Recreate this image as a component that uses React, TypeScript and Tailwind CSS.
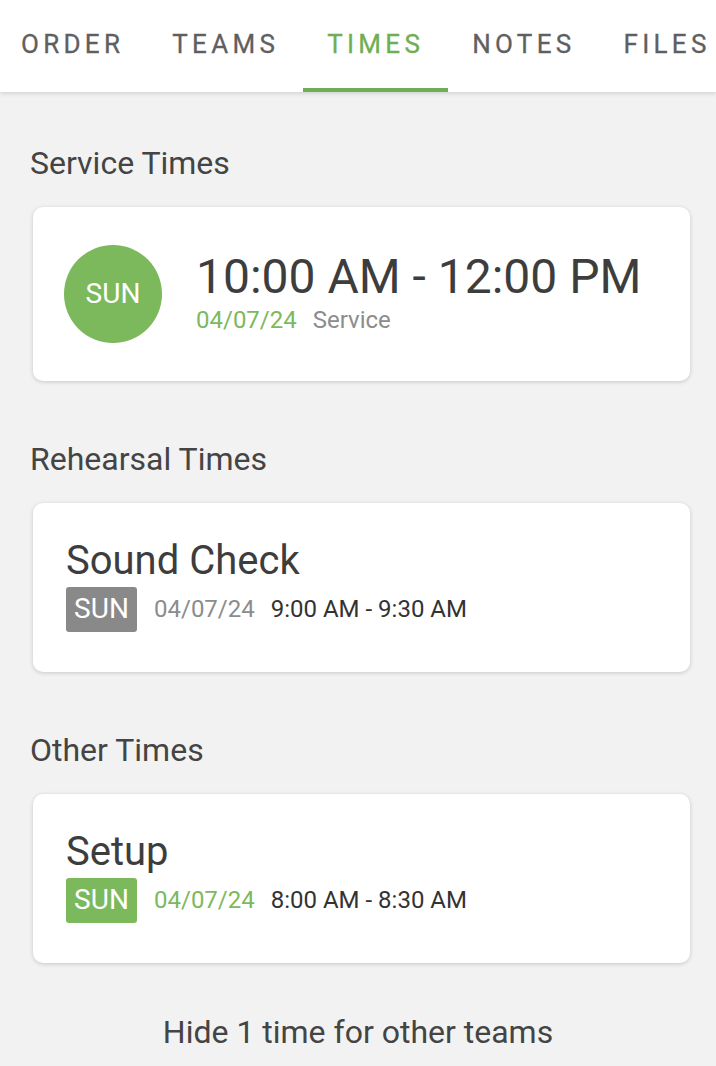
import React from "react";

const tabs = ["ORDER", "TEAMS", "TIMES", "NOTES", "FILES"];

function SectionTitle({ children }: { children: React.ReactNode }) {
	return (
		<h2 className="px-[30px] text-[32px] leading-[38px] text-[#444]">{children}</h2>
	);
}

function TimeCard({
	title,
	date,
	time,
	badge,
}: {
	title: string;
	date: string;
	time: string;
	badge: "gray" | "green";
}) {
	const isGreen = badge === "green";
	return (
		<div className="ml-[33px] mr-[26px] mt-[25px] flex h-[169px] flex-col justify-center rounded-[10px] bg-white pb-[6px] pl-[33px] shadow-[0_1px_4px_rgba(0,0,0,0.18)]">
			<div className="text-[40px] leading-[46px] text-[#3d3d3d]">{title}</div>
			<div className="mt-[3px] flex items-center">
				<span
					className={
						isGreen
							? "flex h-[45px] w-[71px] items-center justify-center rounded-[3px] bg-[#7cb95c] text-[28px] text-white"
							: "flex h-[45px] w-[71px] items-center justify-center rounded-[3px] bg-[#898989] text-[28px] text-white"
					}
				>
					SUN
				</span>
				<span
					className={
						isGreen
							? "ml-[17px] text-[24px] text-[#7cb95c]"
							: "ml-[17px] text-[24px] text-[#8c8c8c]"
					}
				>
					{date}
				</span>
				<span className="ml-[16px] text-[24px] text-[#333]">{time}</span>
			</div>
		</div>
	);
}

export default function App() {
	return (
		<div className="min-h-[1066px] overflow-hidden bg-[#f2f2f2] font-['Roboto',sans-serif]">
			{/* Tabs */}
			<div className="relative z-10 flex h-[92px] items-stretch bg-white shadow-[0_2px_4px_rgba(0,0,0,0.12)]">
				<div className="-ml-[3px] flex items-stretch">
					{tabs.map((t) => {
						const active = t === "TIMES";
						return (
							<div
								key={t}
								className={
									active
										? "flex shrink-0 flex-col items-center justify-center border-b-[4px] border-[#6fae52] px-[24px] text-[26px] tracking-[4.3px] text-[#6fae52] [-webkit-text-stroke:0.3px_#6fae52]"
										: "flex shrink-0 flex-col items-center justify-center border-b-[4px] border-transparent px-[24px] text-[26px] tracking-[4.3px] text-[#5f5f5f] [-webkit-text-stroke:0.3px_#5f5f5f]"
								}
							>
								{t}
							</div>
						);
					})}
				</div>
			</div>

			<div className="pt-[52px]">
				<SectionTitle>Service Times</SectionTitle>
				<div className="ml-[33px] mr-[26px] mt-[25px] flex h-[174px] items-center rounded-[10px] bg-white pl-[31px] shadow-[0_1px_4px_rgba(0,0,0,0.18)]">
					<div className="flex h-[98px] w-[98px] shrink-0 items-center justify-center rounded-full bg-[#7cb95c] text-[28px] text-white">
						SUN
					</div>
					<div className="ml-[34px] flex flex-col">
						<div className="text-[48px] leading-[46px] text-[#3d3d3d]">
							10:00 AM - 12:00 PM
						</div>
						<div className="mt-[6px] flex items-center text-[24px] leading-[28px]">
							<span className="text-[#7cb95c]">04/07/24</span>
							<span className="ml-[16px] text-[#8c8c8c]">Service</span>
						</div>
					</div>
				</div>

				<div className="mt-[59px]">
					<SectionTitle>Rehearsal Times</SectionTitle>
					<TimeCard
						title="Sound Check"
						date="04/07/24"
						time="9:00 AM - 9:30 AM"
						badge="gray"
					/>
				</div>

				<div className="mt-[59px]">
					<SectionTitle>Other Times</SectionTitle>
					<TimeCard
						title="Setup"
						date="04/07/24"
						time="8:00 AM - 8:30 AM"
						badge="green"
					/>
				</div>

				<div className="mt-[50px] text-center text-[32px] leading-[38px] text-[#444]">
					Hide 1 time for other teams
				</div>
			</div>
		</div>
	);
}
